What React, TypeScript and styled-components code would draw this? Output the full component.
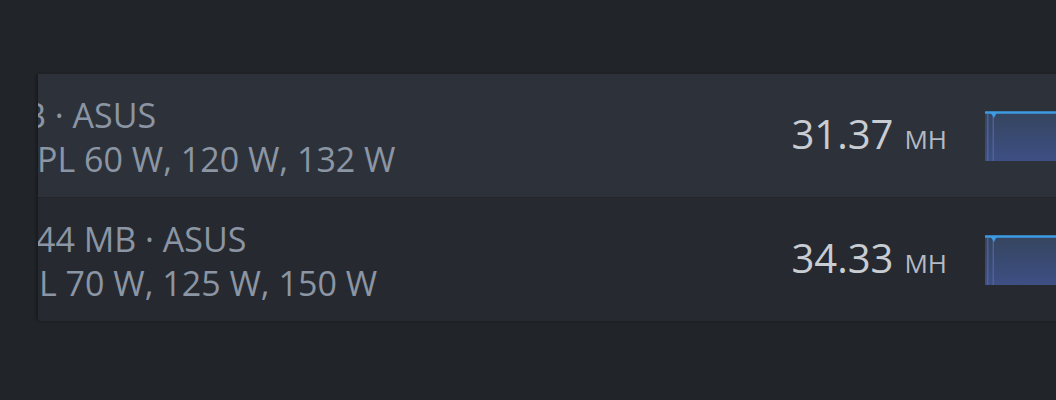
import React from "react";
import styled, { createGlobalStyle } from "styled-components";

const Global = createGlobalStyle`
  html, body { margin: 0; padding: 0; background: #212428; }
  body { font-family: "Open Sans", "Noto Sans", sans-serif; overflow: hidden; }
`;

const Page = styled.div`
  width: 1056px;
  height: 400px;
  padding: 74px 0 0 38px;
  box-sizing: border-box;
  background: #212428;
  overflow: hidden;
`;

const List = styled.div`
  display: flex;
  flex-direction: column;
  width: 1062px;
  border-bottom-left-radius: 3px;
  overflow: hidden;
  box-shadow: -2px 0 3px rgba(0, 0, 0, 0.25);
`;

const Row = styled.div<{ $alt?: boolean }>`
  display: flex;
  align-items: center;
  height: ${(p) => (p.$alt ? "123px" : "124px")};
  background: ${(p) => (p.$alt ? "#262a30" : "#2d323a")};
  border-bottom: ${(p) => (p.$alt ? "none" : "1px solid #22262b")};
  box-sizing: border-box;
`;

const Info = styled.div`
  flex: 1;
  min-width: 0;
  overflow: hidden;
  display: flex;
  flex-direction: column;
  padding-top: 2px;
`;

const Line = styled.div<{ $shift: number }>`
  font-size: 34px;
  line-height: 44px;
  color: #8b95a3;
  white-space: nowrap;
  margin-left: ${(p) => p.$shift}px;
`;

const Value = styled.div`
  display: flex;
  align-items: baseline;
  gap: 11px;
  color: #c8ccd3;
  padding-bottom: 4px;
`;

const Number = styled.span`
  font-size: 40px;
  line-height: 48px;
`;

const Unit = styled.span`
  font-size: 26px;
  color: #b4bac4;
`;

const Chart = styled.svg`
  flex: none;
  width: 115px;
  height: 52px;
  margin-left: 38px;
  margin-top: 0;
`;

function Spark({ id }: { id: string }) {
  return (
    <Chart viewBox="0 0 115 52">
      <defs>
        <linearGradient id={id} x1="0" y1="0" x2="0" y2="1">
          <stop offset="0" stopColor="#35455f" />
          <stop offset="1" stopColor="#3e4f84" />
        </linearGradient>
      </defs>
      <path d="M0 3 L8 3 L9 5 L10 3 L115 3 L115 51 L0 51 Z" fill={`url(#${id})`} />
      <rect x="2" y="4" width="1.5" height="47" fill="#5068a0" opacity="0.8" />
      <rect x="7.5" y="6" width="1.5" height="45" fill="#5068a0" opacity="0.8" />
      <path d="M0 2.5 L115 2.5" stroke="#3d9be3" strokeWidth="2.5" fill="none" />
      <path d="M5 2 L12 2 L9 8 Z" fill="#3d9be3" />
    </Chart>
  );
}

const rows = [
  { l1: "B · ASUS", s1: -14, l2: "PL 60 W, 120 W, 132 W", s2: -1, v: "31.37" },
  { l1: "44 MB · ASUS", s1: -2, l2: "L 70 W, 125 W, 150 W", s2: 1, v: "34.33" },
];

export default function App() {
  return (
    <>
      <Global />
      <Page>
        <List>
          {rows.map((r, i) => (
            <Row key={i} $alt={i === 1}>
              <Info>
                <Line $shift={r.s1}>{r.l1}</Line>
                <Line $shift={r.s2}>{r.l2}</Line>
              </Info>
              <Value>
                <Number>{r.v}</Number>
                <Unit>MH</Unit>
              </Value>
              <Spark id={`g${i}`} />
            </Row>
          ))}
        </List>
      </Page>
    </>
  );
}
